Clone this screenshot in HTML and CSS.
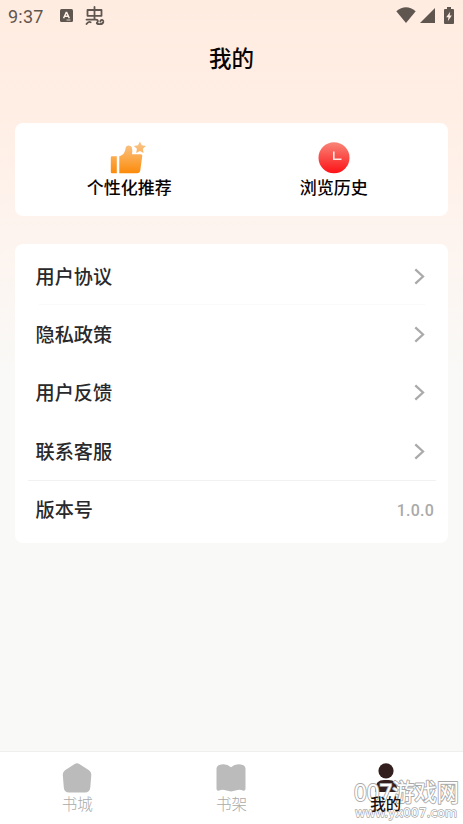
FILE: index.html
```
<!DOCTYPE html>
<html lang="zh-CN">
<head>
    <meta charset="UTF-8">
    <meta name="viewport" content="width=device-width, initial-scale=1.0">
    <title>我的</title>
    <link rel="stylesheet" href="styles.css">
</head>
<body>
    <div class="status-bar">
        <span class="time">9:37</span>
        <svg class="app-icon" width="13" height="13" viewBox="0 0 13 13">
            <rect width="13" height="13" rx="1.5" fill="#5f564f"/>
            <path d="M3.6 9.2 6.2 3.4h.5l2.6 5.8M4.7 7.3h3.6" fill="none" stroke="#fff0e7" stroke-width="1.5"/>
            <path d="M6.500 11h4" stroke="#fff0e7" stroke-width=".8"/>
        </svg>
        <svg class="bug-icon" width="20" height="20" viewBox="0 0 20 20" fill="none" stroke="#5f564f" stroke-width="1.8" stroke-linecap="round" stroke-linejoin="round">
            <path d="M2.500 4h14v5.800h-14zM9.500 .9v12.500M1.500 13.600h9.500c2.500 0 2.300 2.200 1 3-1.500 1.500 5.500 2.800 6.300-.6.500-2.600-3.300-2.600-2.900-.4M1.500 18c1.300-2 2.600-2.600 4.200-1.800"/>
        </svg>
        <div class="signals">
            <svg width="20" height="16" viewBox="0 0 20 16"><path d="M.3 4.3Q10-3.8 19.7 4.3L10 16z" fill="#5f564f"/></svg>
            <svg width="15" height="15" viewBox="0 0 15 15"><path d="M15 0v15H0z" fill="#5f564f"/></svg>
            <svg width="10" height="17" viewBox="0 0 10 17">
                <path d="M3 0h4v2h2q1 0 1 1v13q0 1-1 1H1q-1 0-1-1V3q0-1 1-1h2z" fill="#5f564f"/>
                <path d="M6.2 4.7 2.2 10.2h2.3l-.7 4 4-5.7H5.6z" fill="#fff0e7"/>
            </svg>
        </div>
    </div>
    <h1>我的</h1>

    <div class="card shortcuts">
        <div class="shortcut">
            <svg class="thumb" width="36" height="33" viewBox="0 0 36 33">
                <defs>
                    <linearGradient id="orange" x1="0" y1="0" x2="0" y2="33" gradientUnits="userSpaceOnUse">
                        <stop offset="0" stop-color="#f9c791"/>
                        <stop offset=".5" stop-color="#fbaa4c"/>
                        <stop offset="1" stop-color="#fc8908"/>
                    </linearGradient>
                </defs>
                <g fill="url(#orange)">
                    <path d="M1 15.3h5.800v17H2q-1.200 0-1.200-1.200V16.500q0-1.200 1.200-1.200z"/>
                    <path d="M9.300 15.300c4.200-1 5.900-4.600 6.300-8.300.4-3.400 5.200-3.500 6.300-.2.600 2 .4 4.500 0 6.500h8.500q2.200 0 1.800 2.300l-1.900 13.700q-.4 3-3.300 3H9.300z"/>
                    <path d="m29.900.6 1.900 3.700 4.100.6-3 2.900.7 4.100-3.700-1.900-3.700 1.900.7-4.100-3-2.900 4.100-.6z"/>
                </g>
            </svg>
            <span>个性化推荐</span>
        </div>
        <div class="shortcut">
            <svg width="32" height="33" viewBox="0 0 32 33">
                <defs>
                    <linearGradient id="red" x1="0" y1="0" x2="0" y2="1">
                        <stop offset="0" stop-color="#f88578"/>
                        <stop offset="1" stop-color="#fd1216"/>
                    </linearGradient>
                </defs>
                <circle cx="16" cy="16.800" r="15.500" fill="url(#red)"/>
                <path d="M15.800 10.600v7.600h7.700" fill="none" stroke="#ffe9e6" stroke-width="1.600"/>
            </svg>
            <span>浏览历史</span>
        </div>
    </div>

    <div class="card menu">
        <div class="row line-light"><span>用户协议</span><svg class="arrow" viewBox="0 0 11 17"><path d="m1.300 1.300 7.700 7.200-7.700 7.200"/></svg></div>
        <div class="row"><span>隐私政策</span><svg class="arrow" viewBox="0 0 11 17"><path d="m1.300 1.300 7.700 7.200-7.700 7.200"/></svg></div>
        <div class="row"><span>用户反馈</span><svg class="arrow" viewBox="0 0 11 17"><path d="m1.300 1.300 7.700 7.200-7.700 7.200"/></svg></div>
        <div class="row line"><span>联系客服</span><svg class="arrow" viewBox="0 0 11 17"><path d="m1.300 1.300 7.700 7.200-7.700 7.200"/></svg></div>
        <div class="row"><span>版本号</span><span class="version">1.0.0</span></div>
    </div>

    <nav class="tabs">
        <div class="tab">
            <svg width="30" height="30" viewBox="0 0 30 30"><path d="M12.700 .9Q15-.3 17.300 .9L27 7.300Q29.500 9.200 29.300 12l-1 12.500Q27.700 29.500 23 29.500H7Q2.300 29.500 1.800 24.500L.8 12Q.5 9.200 3 7.300z" fill="#bbb"/></svg>
            <span>书城</span>
        </div>
        <div class="tab">
            <svg width="30" height="30" viewBox="0 0 30 30"><path d="M.5 5.500Q.5 3.500 2.500 2.300 9.500-.8 15 4.300 20.500-.8 27.500 2.300q2 1.200 2 3.200v20.300q0 2.200-2 2-3.500-1.500-7-.6L15 28.600l-5.500-1.400q-3.500-.9-7 .6-2 .2-2-2z" fill="#bbb"/></svg>
            <span>书架</span>
        </div>
        <div class="tab active">
            <svg width="30" height="30" viewBox="0 0 30 30"><circle cx="15" cy="7.800" r="7.600" fill="#33201e"/><path d="M4.500 29V25.500q0-8.500 8.500-8.500h4.500q8.500 0 8.500 8.500v3.500z" fill="#33201e"/></svg>
            <span>我的</span>
        </div>
        <div class="watermark">
            <svg width="112" height="46" viewBox="0 0 112 46">
                <text class="mark-name" x="4" y="22.500" textLength="105" lengthAdjust="spacingAndGlyphs">007游戏网</text>
                <text class="mark-url" x="5" y="39" textLength="102" lengthAdjust="spacingAndGlyphs">www.yx007.com</text>
            </svg>
        </div>
    </nav>
</body>
</html>
```
FILE: styles.css
```
* {
    box-sizing: border-box;
}
body {
    margin: 0;
    height: 824px;
    display: flex;
    flex-direction: column;
    overflow: hidden;
    font-family: Roboto, "Noto Sans CJK SC", sans-serif;
    color: #090303;
    background: linear-gradient(#ffece1 0, #ffeee4 110px, #fef3ed 210px, #f9f9f7 375px, #f9f9f7 100%);
}
svg {
    display: block;
    flex: none;
}
.status-bar {
    height: 32px;
    padding: 0 8px;
    display: flex;
    align-items: center;
    color: #5f564f;
}
.time {
    width: 52px;
    font-size: 18px;
    letter-spacing: .2px;
}
.app-icon {
    margin-top: -1px;
}
.bug-icon {
    margin-left: 12px;
}
.signals {
    display: flex;
    align-items: center;
    gap: 4px;
    margin: -2px 1px 0 auto;
}
.signals svg:last-child {
    margin-left: 5px;
}
h1 {
    margin: 0;
    height: 91px;
    padding-top: 10px;
    font-size: 22.5px;
    line-height: 34px;
    font-weight: 500;
    text-align: center;
}
.card {
    margin: 0 15px;
    background: #fff;
    border-radius: 8px;
}
.shortcuts {
    height: 93px;
    padding: 18px 12px 0;
    display: flex;
}
.shortcut {
    flex: 1;
    display: flex;
    flex-direction: column;
    align-items: center;
    font-size: 17px;
    line-height: 28px;
    font-weight: 500;
}
.thumb {
    margin-right: 3px;
}
.menu {
    margin-top: 28px;
    height: 299px;
    padding: 3px 12px 0 13px;
}
.row {
    height: 58.4px;
    padding: 0 10px 0 7.5px;
    display: flex;
    align-items: center;
    justify-content: space-between;
    font-size: 19.2px;
    font-weight: 500;
    color: #29292b;
}
.row span {
    margin-top: -1px;
}
.line {
    background: linear-gradient(#f1f1f1, #f1f1f1) bottom / 100% 1px no-repeat;
}
.line-light {
    background: linear-gradient(#fafafa, #fafafa) bottom / 386px 1px no-repeat;
}
.arrow {
    width: 11px;
    height: 17px;
    margin-right: 1px;
    fill: none;
    stroke: #aaa;
    stroke-width: 2.3;
}
.row .version {
    margin: 1px -8px 0 0;
    font-size: 16px;
    letter-spacing: .2px;
    color: #aaa;
}
.tabs {
    position: relative;
    height: 73px;
    margin-top: auto;
    padding-top: 11px;
    display: flex;
    background: #fff;
    border-top: 1px solid #efefed;
}
.tab {
    flex: 1;
    display: flex;
    flex-direction: column;
    align-items: center;
    font-size: 15.5px;
    line-height: 25px;
    font-weight: 300;
    color: #aaa;
}
.active {
    color: #1b1010;
    font-weight: 500;
}
.active span {
    z-index: 1;
}
/* sits over the last tab */
.watermark {
    position: absolute;
    right: 1px;
    bottom: 0;
}
.mark-name,
.mark-url {
    fill: #fff;
    stroke: #aaa;
    paint-order: stroke;
    stroke-linejoin: round;
}
.mark-name {
    font-family: "Noto Sans", "Noto Sans CJK SC", sans-serif;
    font-size: 24px;
    stroke-width: 1.9px;
}
.mark-url {
    font-family: "DejaVu Sans", sans-serif;
    font-size: 13px;
    stroke-width: 1.4px;
}
```
